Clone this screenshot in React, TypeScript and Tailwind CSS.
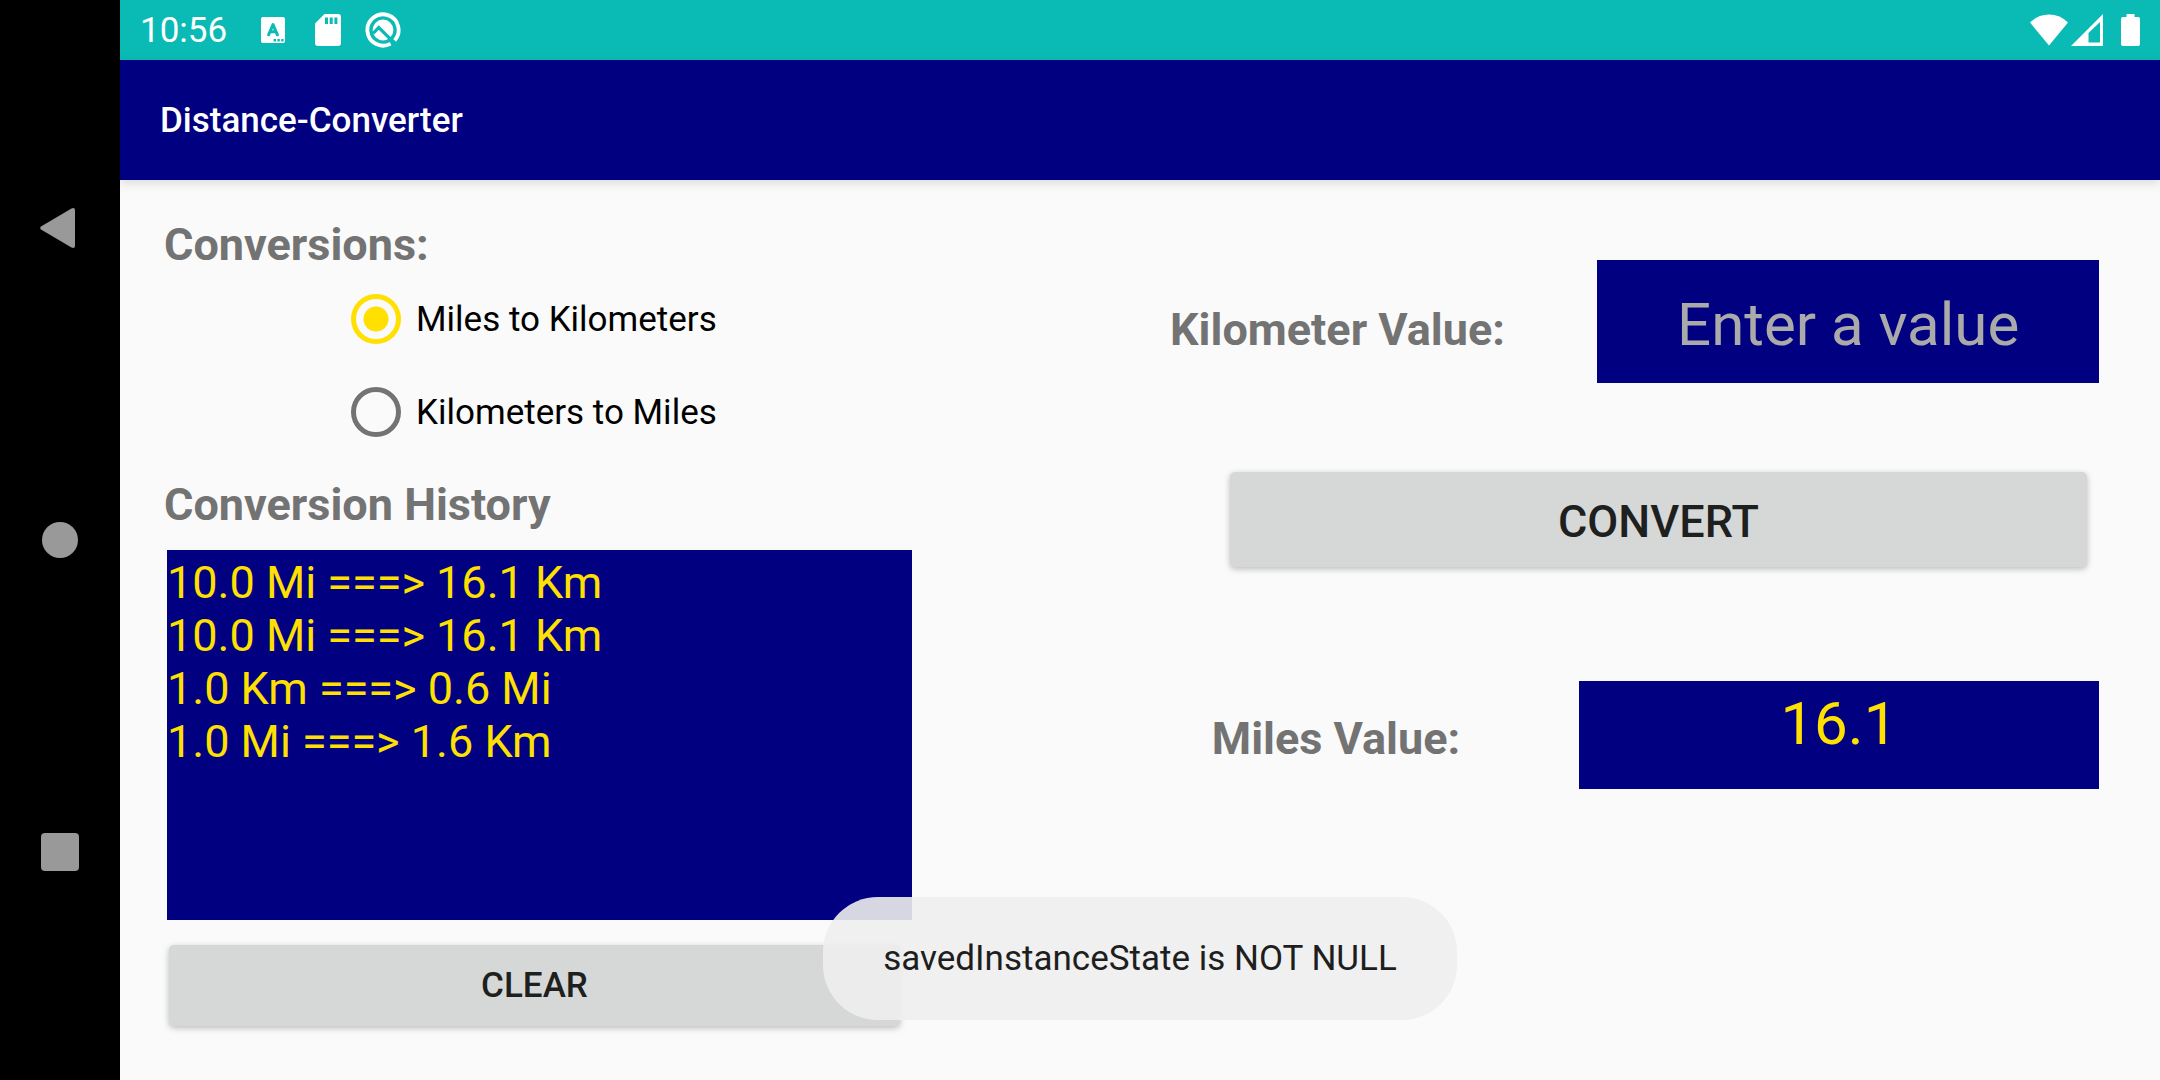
import React, { useState } from "react";

const conversions = ["Miles to Kilometers", "Kilometers to Miles"];

const history = [
  "10.0 Mi ===> 16.1 Km",
  "10.0 Mi ===> 16.1 Km",
  "1.0 Km ===> 0.6 Mi",
  "1.0 Mi ===> 1.6 Km",
];

function NavigationBar() {
  return (
    <nav className="flex w-[120px] shrink-0 flex-col bg-black py-[72px] text-[#999999]">
      <button type="button" aria-label="Back" className="flex flex-1 items-center justify-center">
        <svg width="40" height="42" viewBox="0 0 40 42" fill="currentColor">
          <path d="M31.5 1.6 L1.4 19.2 Q-1 21 1.4 22.8 L31.5 40.6 Q35 42 35 38.5 V3.5 Q35 0 31.5 1.6 Z" />
        </svg>
      </button>
      <button type="button" aria-label="Home" className="flex flex-1 items-center justify-center">
        <span className="size-9 rounded-full bg-[#999999]" />
      </button>
      <button type="button" aria-label="Recent apps" className="flex flex-1 items-center justify-center">
        <span className="size-[38px] rounded bg-[#999999]" />
      </button>
    </nav>
  );
}

function StatusBar() {
  return (
    <div className="flex h-[60px] items-center bg-[#0abbb5] pr-5 pl-5 text-white">
      <span className="leading-[43px]">10:56</span>
      <div className="ml-[34px] flex items-center gap-[30px]">
        <svg width="24" height="26" viewBox="0 0 24 26">
          <rect width="24" height="26" rx="2" fill="#fff" />
          <path d="M7.6 17.8 L12 7.6 L16.4 17.8 M9 14.8 H15" fill="none" stroke="#0abbb5" strokeWidth="3" strokeLinecap="round" strokeLinejoin="round" />
          <path d="M12.6 22h2.4v2.4h-2.4z M16.4 22h2.4v2.4h-2.4z M20.2 22h2.4v2.4h-2.4z" fill="#0abbb5" />
        </svg>
        <svg width="26" height="32" viewBox="0 0 26 32">
          <path d="M9.5 0 H23 Q26 0 26 3 V29 Q26 32 23 32 H3 Q0 32 0 29 V9.5 Z" fill="#fff" />
          <path d="M10 3.5h3v6.5h-3z M14.7 3.5h3v6.5h-3z M19.4 3.5h3v6.5h-3z" fill="#0abbb5" />
        </svg>
        <svg className="-ml-1.5" width="36" height="36" viewBox="0 0 36 36">
          <path d="M25.6 31.6 A15.6 15.6 0 1 1 29.6 28.4" fill="none" stroke="#fff" strokeWidth="3.8" />
          <circle cx="18" cy="18" r="10.4" fill="#fff" />
          <path d="M8 21.4 L13.8 15.6 L29 30.6" fill="none" stroke="#0abbb5" strokeWidth="3.2" />
        </svg>
      </div>
      <div className="ml-auto flex items-center">
        <svg width="38" height="32" viewBox="0 0 38 32" fill="#fff">
          <path d="M19 31.5 L0 8.5 Q8 .5 19 .5 T38 8.5 Z" />
        </svg>
        <svg className="ml-[3px]" width="32" height="32" viewBox="0 0 32 32" fill="#fff">
          <path fillRule="evenodd" d="M32 0 V32 H0 Z M29 8 L17.5 19 V28.5 H29 Z" />
        </svg>
        <svg className="ml-[18px]" width="19" height="32" viewBox="0 0 19 32" fill="#fff">
          <path d="M5.5 0 H13.5 V3 H17 Q19 3 19 5 V30 Q19 32 17 32 H2 Q0 32 0 30 V5 Q0 3 2 3 H5.5 Z" />
        </svg>
      </div>
    </div>
  );
}

export default function App() {
  const [selected, setSelected] = useState(conversions[0]);
  const [value, setValue] = useState("");

  return (
    <div className="flex min-h-screen bg-[#fafafa] font-['Roboto',sans-serif] text-[35px] leading-[43px] text-black">
      <NavigationBar />
      <div className="relative flex min-w-0 flex-1 flex-col">
        <StatusBar />
        <header className="flex h-[120px] items-center bg-[#000080] px-10 shadow-[0_3px_10px_rgba(0,0,0,0.13)]">
          <h1 className="font-medium text-white">Distance-Converter</h1>
        </header>

        <main className="grid flex-1 grid-cols-[748fr_929fr] gap-[258px] pr-[61px] pl-11">
          <section className="flex flex-col pt-[38px]">
            <fieldset>
              <legend className="text-[45px] leading-[53px] font-bold text-[#737373]">Conversions:</legend>
              <div className="mt-[23px] ml-[187px] flex flex-col gap-[43px]">
                {conversions.map((name) => (
                  <label key={name} className="flex items-center gap-[15px]">
                    <input
                      type="radio"
                      name="conversion"
                      checked={selected === name}
                      onChange={() => setSelected(name)}
                      className="size-[50px] appearance-none rounded-full border-5 border-[#737373] checked:border-[#ffe000] checked:bg-[radial-gradient(circle,#ffe000_12px,transparent_13px)]"
                    />
                    <span>{name}</span>
                  </label>
                ))}
              </div>
            </fieldset>
            <h2 className="mt-[41px] text-[45px] leading-[53px] font-bold text-[#737373]">Conversion History</h2>
            <ul className="mt-[19px] ml-[3px] h-[370px] bg-[#000080] pt-1.5 text-[45px] leading-[53px] text-[#ffe000]">
              {history.map((entry, i) => (
                <li key={i}>{entry}</li>
              ))}
            </ul>
            <button
              type="button"
              className="mt-[25px] mr-3 ml-[5px] h-[81px] rounded-[5px] bg-[#d6d8d7] font-medium text-[#1e1f1f] shadow-[0_2px_6px_rgba(0,0,0,0.25)]"
            >
              CLEAR
            </button>
          </section>

          <section className="flex flex-col pt-20">
            <div className="flex items-baseline justify-between">
              <label htmlFor="distance" className="w-[332px] text-center text-[45px] leading-[53px] font-bold whitespace-nowrap text-[#737373]">
                Kilometer Value:
              </label>
              <input
                id="distance"
                value={value}
                onChange={(e) => setValue(e.target.value)}
                placeholder="Enter a value"
                className="h-[123px] w-[54%] bg-[#000080] pt-1.5 text-center text-[60px] leading-[70px] text-[#ffe000] placeholder:text-[#aaaaaa]"
              />
            </div>
            <button
              type="button"
              className="mt-[89px] mr-3 ml-[60px] h-[95px] rounded-[5px] bg-[#d6d8d7] pt-1 text-[45px] leading-[53px] font-medium text-[#1e1f1f] shadow-[0_2px_6px_rgba(0,0,0,0.25)]"
            >
              CONVERT
            </button>
            <div className="mt-[114px] flex items-end justify-between">
              <label htmlFor="result" className="w-[332px] pb-6 text-center text-[45px] leading-[53px] font-bold text-[#737373]">
                Miles Value:
              </label>
              <output id="result" className="block h-[108px] w-[56%] bg-[#000080] pt-2 text-center text-[60px] leading-[70px] text-[#ffe000]">
                16.1
              </output>
            </div>
          </section>
        </main>

        <div className="pointer-events-none absolute inset-x-0 bottom-[60px] flex justify-center">
          <div role="status" className="rounded-[55px] bg-[#eeeeee]/90 px-[60px] py-10 text-[#1e1e1e]">
            savedInstanceState is NOT NULL
          </div>
        </div>
      </div>
    </div>
  );
}
